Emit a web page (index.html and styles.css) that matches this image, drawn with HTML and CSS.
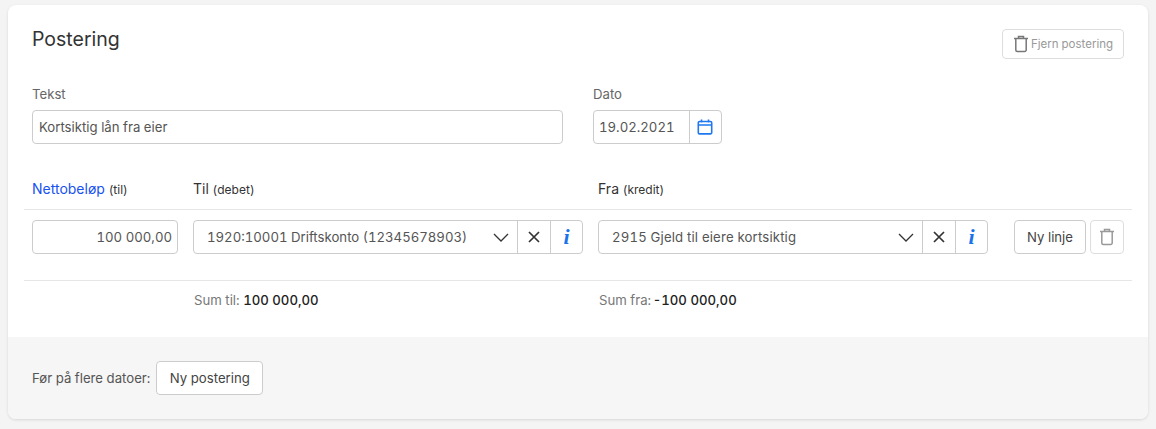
FILE: index.html
```html
<!DOCTYPE html>
<html lang="no">
<head>
<meta charset="utf-8">
<title>Postering</title>
<link rel="stylesheet" href="styles.css">
</head>
<body>
<main class="card">
  <section class="body">
    <header class="head">
      <h1 class="title">Postering</h1>
      <button class="btn btn-remove"><svg class="ic-trash" viewBox="0 0 16 18" width="16" height="18"><path d="M1 3.5h14M5.5 3.5V1.5h5v2M2.8 3.5V15a1.5 1.5 0 0 0 1.5 1.5h7.4a1.5 1.5 0 0 0 1.5-1.5V3.5" fill="none" stroke="#777" stroke-width="1.5"/></svg>Fjern postering</button>
    </header>
    <div class="meta">
      <div class="field field-text">
        <label class="label">Tekst</label>
        <div class="input">Kortsiktig lån fra eier</div>
      </div>
      <div class="field">
        <label class="label">Dato</label>
        <div class="group group-date">
          <div class="seg seg-date">19.02.2021</div>
          <div class="seg seg-icon seg-cal"><svg viewBox="0 0 16 16" width="16" height="16"><path d="M2.5 2.5h11a1.2 1.2 0 0 1 1.2 1.2v10a1.2 1.2 0 0 1-1.2 1.2h-11a1.2 1.2 0 0 1-1.2-1.2v-10a1.2 1.2 0 0 1 1.2-1.2zM1.3 6h13.4M4.5 .6v3M11.5 .6v3" fill="none" stroke="#1f78f0" stroke-width="1.6"/></svg></div>
        </div>
      </div>
    </div>
    <div class="cols cols-head">
      <div class="c-net th th-blue">Nettobeløp <small>(til)</small></div>
      <div class="c-acc th">Til <small>(debet)</small></div>
      <div class="c-acc th">Fra <small>(kredit)</small></div>
      <div class="c-act"></div>
    </div>
    <div class="cols cols-row">
      <div class="c-net input input-num">100 000,00</div>
      <div class="c-acc group">
        <div class="seg seg-select"><span>1920:10001 Driftskonto (12345678903)</span><svg viewBox="0 0 16 9" width="16" height="9"><path d="M1 1l7 7 7-7" fill="none" stroke="#333" stroke-width="1.3"/></svg></div>
        <div class="seg seg-icon seg-x"><svg viewBox="0 0 12 12" width="12" height="12"><path d="M1 1l10 10M11 1L1 11" fill="none" stroke="#333" stroke-width="1.7"/></svg></div>
        <div class="seg seg-icon seg-info">i</div>
      </div>
      <div class="c-acc group">
        <div class="seg seg-select"><span class="wide">2915 Gjeld til eiere kortsiktig</span><svg viewBox="0 0 16 9" width="16" height="9"><path d="M1 1l7 7 7-7" fill="none" stroke="#333" stroke-width="1.3"/></svg></div>
        <div class="seg seg-icon seg-x"><svg viewBox="0 0 12 12" width="12" height="12"><path d="M1 1l10 10M11 1L1 11" fill="none" stroke="#333" stroke-width="1.7"/></svg></div>
        <div class="seg seg-icon seg-info">i</div>
      </div>
      <div class="c-act">
        <button class="btn btn-line">Ny linje</button>
        <button class="btn btn-del"><svg viewBox="0 0 16 18" width="16" height="18"><path d="M1 3.5h14M5.5 3.5V1.5h5v2M2.8 3.5V15a1.5 1.5 0 0 0 1.5 1.5h7.4a1.5 1.5 0 0 0 1.5-1.5V3.5" fill="none" stroke="#999" stroke-width="1.5"/></svg></button>
      </div>
    </div>
    <div class="cols cols-sum">
      <div class="c-net"></div>
      <div class="c-acc sum">Sum til: <b>100 000,00</b></div>
      <div class="c-acc sum sum-neg">Sum fra: <b>-100 000,00</b></div>
      <div class="c-act"></div>
    </div>
  </section>
  <footer class="foot">
    <span class="foot-label">Før på flere datoer:</span>
    <button class="btn btn-new">Ny postering</button>
  </footer>
</main>
</body>
</html>
```
FILE: styles.css
```css
* { box-sizing: border-box; }
html, body { height: 100%; }
body {
  margin: 0;
  padding: 5px 8px 10px;
  background: #f4f4f4;
  font-family: Inter, "Liberation Sans", sans-serif;
  font-size: 13.2px;
  font-variant-numeric: tabular-nums;
  color: #555;
  overflow: hidden;
}
.card {
  background: #fff;
  border-radius: 8px;
  box-shadow: 0 1px 3px rgba(0,0,0,.12);
  overflow: hidden;
  height: 414px;
}
.body { height: 332px; padding: 0 16px; }
.head { display: flex; justify-content: space-between; align-items: flex-start; height: 84px; padding: 24px 8px 0; }
.title { margin: 0; font-size: 19.5px; line-height: 21px; font-weight: 400; color: #333; }
.btn {
  font: inherit;
  color: #444;
  background: #fff;
  border: 1px solid #ccc;
  border-radius: 4px;
  display: inline-flex;
  align-items: center;
  justify-content: center;
  height: 34px;
  padding: 0;
}
.btn-remove { width: 122px; height: 30px; font-size: 11.5px; color: #999; border-color: #ddd; gap: 2px; }
.meta { display: flex; padding-left: 8px; gap: 30px; height: 65px; }
.field-text { width: 531px; }
.label { display: block; height: 21px; line-height: 10px; color: #666; }
.input {
  height: 34px;
  line-height: 32px;
  border: 1px solid #ccc;
  border-radius: 4px;
  padding: 0 6px;
}
.group { display: flex; height: 34px; border: 1px solid #ccc; border-radius: 4px; }
.group-date { width: 129px; }
.seg { display: flex; align-items: center; justify-content: center; }
.seg-date { flex: 1; justify-content: flex-start; padding-left: 5px; }
.seg-icon { width: 32px; border-left: 1px solid #ccc; }
.seg-cal { padding-right: 2px; }
.seg-x { width: 33px; }
.seg-select { flex: 1; justify-content: space-between; padding: 0 8px 0 13px; }
.wide { letter-spacing: .16px; }
.seg-info { color: #1a73e8; font: italic 700 22px "Liberation Serif", serif; }
.cols { display: grid; grid-template-columns: 146px 390px 390px 121px; column-gap: 15px; padding: 0 8px; }
.c-act { display: flex; gap: 4px; justify-content: flex-end; }
.cols-head { height: 56px; align-items: start; padding-top: 27px; border-bottom: 1px solid #e6e6e6; }
.th { color: #333; font-size: 14px; line-height: 15px; }
.th small { font-size: 12px; }
.th-blue { color: #1652f0; }
.th-blue small { color: #333; }
.cols-row { padding-top: 10px; padding-bottom: 26px; border-bottom: 1px solid #e6e6e6; height: 71px; }
.input-num { text-align: right; padding-right: 5px; }
.btn-line { width: 72px; }
.btn-del { width: 34px; border-color: #ddd; }
.cols-sum { padding-top: 11px; }
.sum { color: #777; line-height: 16px; padding-left: 1px; }
.sum b { color: #222; font-weight: 500; }
.sum-neg b { margin-left: -2px; }
.foot { height: 82px; background: #f6f6f6; display: flex; align-items: center; padding: 0 0 0 24px; gap: 6px; }
.btn-new { width: 107px; }
```
